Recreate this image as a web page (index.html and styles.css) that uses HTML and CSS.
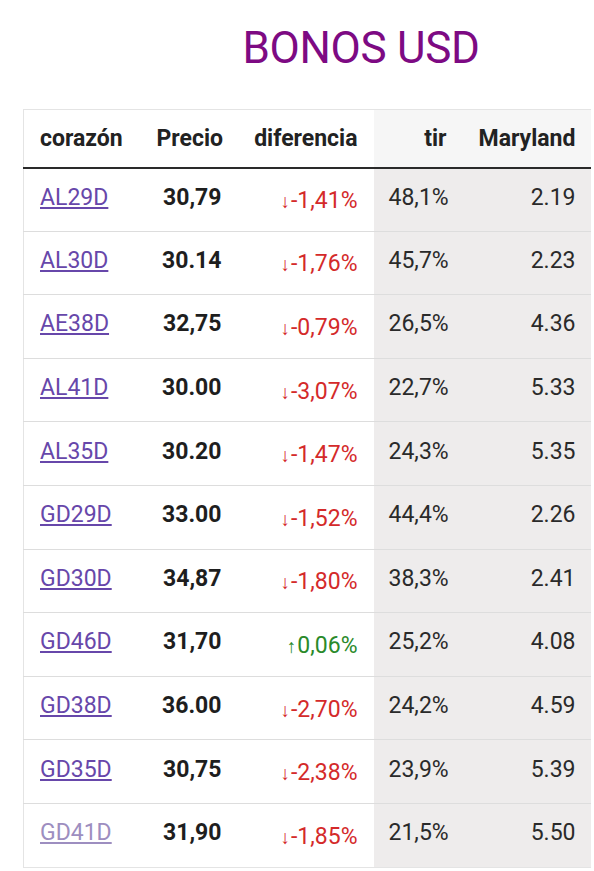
FILE: index.html
```html
<!DOCTYPE html>
<html lang="es">
<head>
<meta charset="utf-8">
<link rel="stylesheet" href="styles.css">
</head>
<body>
<h1 class="title">BONOS USD</h1>
<div class="wrap">
<table class="bonds">
<colgroup>
<col class="c1"><col class="c2"><col class="c3"><col class="c4"><col class="c5">
</colgroup>
<thead>
<tr><th class="l">corazón</th><th>Precio</th><th>diferencia</th><th class="g">tir</th><th class="g">Maryland</th></tr>
</thead>
<tbody>
<tr><td><a href="#">AL29D</a></td><td class="p">30,79</td><td class="d dn"><span class="ar">↓</span>-1,41%</td><td class="g t">48,1%</td><td class="g m">2.19</td></tr>
<tr><td><a href="#">AL30D</a></td><td class="p">30.14</td><td class="d dn"><span class="ar">↓</span>-1,76%</td><td class="g t">45,7%</td><td class="g m">2.23</td></tr>
<tr><td><a href="#">AE38D</a></td><td class="p">32,75</td><td class="d dn"><span class="ar">↓</span>-0,79%</td><td class="g t">26,5%</td><td class="g m">4.36</td></tr>
<tr><td><a href="#">AL41D</a></td><td class="p">30.00</td><td class="d dn"><span class="ar">↓</span>-3,07%</td><td class="g t">22,7%</td><td class="g m">5.33</td></tr>
<tr><td><a href="#">AL35D</a></td><td class="p">30.20</td><td class="d dn"><span class="ar">↓</span>-1,47%</td><td class="g t">24,3%</td><td class="g m">5.35</td></tr>
<tr><td><a href="#">GD29D</a></td><td class="p">33.00</td><td class="d dn"><span class="ar">↓</span>-1,52%</td><td class="g t">44,4%</td><td class="g m">2.26</td></tr>
<tr><td><a href="#">GD30D</a></td><td class="p">34,87</td><td class="d dn"><span class="ar">↓</span>-1,80%</td><td class="g t">38,3%</td><td class="g m">2.41</td></tr>
<tr><td><a href="#">GD46D</a></td><td class="p">31,70</td><td class="d up"><span class="ar">↑</span>0,06%</td><td class="g t">25,2%</td><td class="g m">4.08</td></tr>
<tr><td><a href="#">GD38D</a></td><td class="p">36.00</td><td class="d dn"><span class="ar">↓</span>-2,70%</td><td class="g t">24,2%</td><td class="g m">4.59</td></tr>
<tr><td><a href="#">GD35D</a></td><td class="p">30,75</td><td class="d dn"><span class="ar">↓</span>-2,38%</td><td class="g t">23,9%</td><td class="g m">5.39</td></tr>
<tr><td><a href="#" class="faded">GD41D</a></td><td class="p">31,90</td><td class="d dn"><span class="ar">↓</span>-1,85%</td><td class="g t">21,5%</td><td class="g m">5.50</td></tr>
</tbody>
</table>
</div>
</body>
</html>
```
FILE: styles.css
```css
html, body {
  margin: 0;
  padding: 0;
  background: #ffffff;
  font-family: Roboto, "Liberation Sans", sans-serif;
  color: #222222;
}
.title {
  margin: 0;
  padding: 22px 0 0 128px;
  height: 109px;
  box-sizing: border-box;
  text-align: center;
  font-size: 44px;
  font-weight: 400;
  line-height: 52px;
  color: #7d0a83;
  letter-spacing: -0.3px;
}
.wrap {
  padding-left: 23px;
}
.bonds {
  border-collapse: collapse;
  table-layout: fixed;
  width: 567px;
  border-left: 1px solid #e4e4e4;
  border-top: 1px solid #e4e4e4;
  border-bottom: 1px solid #e4e4e4;
  font-size: 23px;
  line-height: 27px;
}
.c1 { width: 117px; }
.c2 { width: 97px; }
.c3 { width: 136px; }
.c4 { width: 89px; }
.c5 { width: 128px; }
.bonds thead tr { height: 58px; }
.bonds th {
  padding: 0 16px;
  text-align: right;
  font-weight: 700;
  color: #222222;
  border-bottom: 2px solid #2a2a2a;
  white-space: nowrap;
}
.bonds th.l { text-align: left; }
.bonds thead th.g { background: #f6f6f6; }
.bonds tbody tr { height: 63.6px; }
.bonds td {
  padding: 0 16px 5px;
  border-bottom: 1px solid #dddddd;
  white-space: nowrap;
  vertical-align: middle;
}
.bonds tbody tr:last-child td { border-bottom: none; }
.bonds td:first-child { padding-left: 16px; }
.bonds a {
  color: #6747aa;
  text-decoration: underline;
  text-decoration-thickness: 2px;
  text-underline-offset: 2px;
}
.bonds a.faded { color: #9d8ec0; }
.p {
  text-align: right;
  font-weight: 700;
  color: #1e1e1e;
}
.d {
  text-align: right;
  padding-top: 3px !important;
  padding-bottom: 0 !important;
}
.dn { color: #d42a2a; }
.up { color: #2a8a2a; }
.ar {
  font-size: 19px;
  margin-right: 1px;
}
.bonds tbody td.g { background: #eeecec; color: #2a2a2a; }
.t { text-align: left; padding-left: 15px !important; }
.m { text-align: right; padding-right: 15px !important; }
```
